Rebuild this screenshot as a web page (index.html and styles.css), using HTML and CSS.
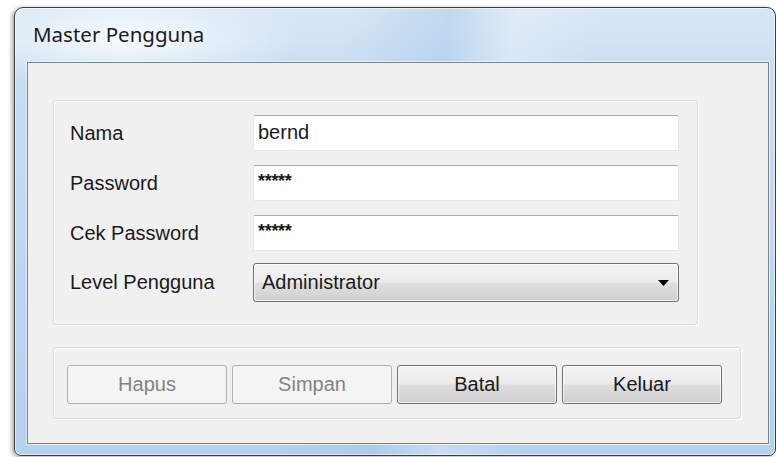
FILE: index.html
```html
<!DOCTYPE html>
<html lang="id">
<head>
<meta charset="utf-8">
<title>Master Pengguna</title>
<link rel="stylesheet" href="styles.css">
</head>
<body>
  <div class="window">
    <div class="titlebar">Master Pengguna</div>
    <div class="client">
      <div class="group form-group">
        <div class="row">
          <span class="label">Nama</span>
          <div class="field">bernd</div>
        </div>
        <div class="row">
          <span class="label">Password</span>
          <div class="field masked">*****</div>
        </div>
        <div class="row">
          <span class="label">Cek Password</span>
          <div class="field masked">*****</div>
        </div>
        <div class="row">
          <span class="label">Level Pengguna</span>
          <div class="combo">
            <span class="combo-text">Administrator</span>
            <svg class="combo-arrow" width="11" height="6" viewBox="0 0 11 6"><path d="M0 0H11L5.5 6Z" fill="#000"/></svg>
          </div>
        </div>
      </div>
      <div class="group button-group">
        <button class="btn" disabled>Hapus</button>
        <button class="btn" disabled>Simpan</button>
        <button class="btn">Batal</button>
        <button class="btn">Keluar</button>
      </div>
    </div>
  </div>
</body>
</html>
```

FILE: styles.css
```css
html, body {
  margin: 0;
  padding: 0;
  background: #ffffff;
}

body {
  width: 776px;
  height: 457px;
  overflow: hidden;
  font-family: "Liberation Sans", Arial, sans-serif;
}

/* Aero-style window frame */
.window {
  box-sizing: border-box;
  margin: 7px 0 0 14px;
  width: 762px;
  height: 449px;
  border: 1px solid #3a3f45;
  border-radius: 9px 9px 7px 7px;
  padding: 0 6px 11px 12px;
  display: flex;
  flex-direction: column;
  background:
    radial-gradient(ellipse 180px 50px at 110px 30px, rgba(255,255,255,0.85), rgba(255,255,255,0) 100%),
    linear-gradient(100deg, rgba(255,255,255,0) 40%, rgba(160,195,228,0.4) 52%, rgba(255,255,255,0.25) 60%, rgba(255,255,255,0) 70%),
    linear-gradient(to bottom, #d8e7f6 0%, #c9def3 14%, #bdd6ef 60%, #b6d1ee 100%);
  box-shadow: -2px 1px 4px rgba(0, 0, 0, 0.35), inset 0 0 0 1px rgba(255, 255, 255, 0.55);
}

.titlebar {
  height: 54px;
  box-sizing: border-box;
  padding: 13px 0 0 6px;
  font-family: "Noto Sans", "Open Sans", sans-serif;
  font-size: 20.5px;
  line-height: 26px;
  color: #1b1b1b;
}

.client {
  flex: 1;
  box-sizing: border-box;
  background: #f0f0f0;
  border: 1px solid #76838f;
  box-shadow: 0 0 0 1px rgba(255, 255, 255, 0.6);
  padding: 37px 0 0 25px;
}

/* Etched group boxes */
.group {
  box-sizing: border-box;
  border: 1px solid #d6dde2;
  border-radius: 3px;
  box-shadow: inset 1px 1px 0 #ffffff, 1px 1px 0 #ffffff;
}

.form-group {
  width: 645px;
  padding: 14px 18px 22px 16px;
  display: flex;
  flex-direction: column;
  gap: 14px;
}

.row {
  display: flex;
  align-items: center;
  height: 36px;
}

.row:last-child {
  height: 39px;
  margin-top: -2px;
}

.label {
  width: 183px;
  font-size: 20px;
  color: #1a1a1a;
}

.field {
  box-sizing: border-box;
  width: 426px;
  height: 36px;
  background: #ffffff;
  border: 1px solid #e3e6ea;
  border-top-color: #a9adb3;
  border-radius: 2px;
  padding: 0 0 0 4px;
  font-size: 20px;
  line-height: 33px;
  color: #1a1a1a;
}

.field.masked {
  font-size: 18px;
  font-weight: bold;
  line-height: 30px;
  letter-spacing: -0.3px;
}

.combo {
  box-sizing: border-box;
  width: 426px;
  height: 39px;
  display: flex;
  align-items: center;
  justify-content: space-between;
  padding: 0 9px 0 8px;
  border: 1px solid #717171;
  border-radius: 3px;
  background: linear-gradient(to bottom, #f3f3f3 0%, #ececec 48%, #dfdfdf 52%, #d0d0d0 100%);
  box-shadow: inset 0 0 0 1px rgba(255, 255, 255, 0.7);
  font-size: 20px;
  color: #1a1a1a;
}

.button-group {
  width: 688px;
  margin-top: 22px;
  padding: 17px 0 14px 13px;
  display: flex;
  gap: 5px;
}

.btn {
  box-sizing: border-box;
  width: 160px;
  height: 39px;
  padding: 0;
  border: 1px solid #707070;
  border-radius: 3px;
  background: linear-gradient(to bottom, #f2f2f2 0%, #ebebeb 48%, #dddddd 52%, #cfcfcf 100%);
  box-shadow: inset 0 0 0 1px rgba(255, 255, 255, 0.75);
  font-family: "Liberation Sans", Arial, sans-serif;
  font-size: 20px;
  color: #1a1a1a;
}

.btn:disabled {
  border-color: #adb2b5;
  background: #f4f4f4;
  color: #838383;
  box-shadow: none;
}
```
